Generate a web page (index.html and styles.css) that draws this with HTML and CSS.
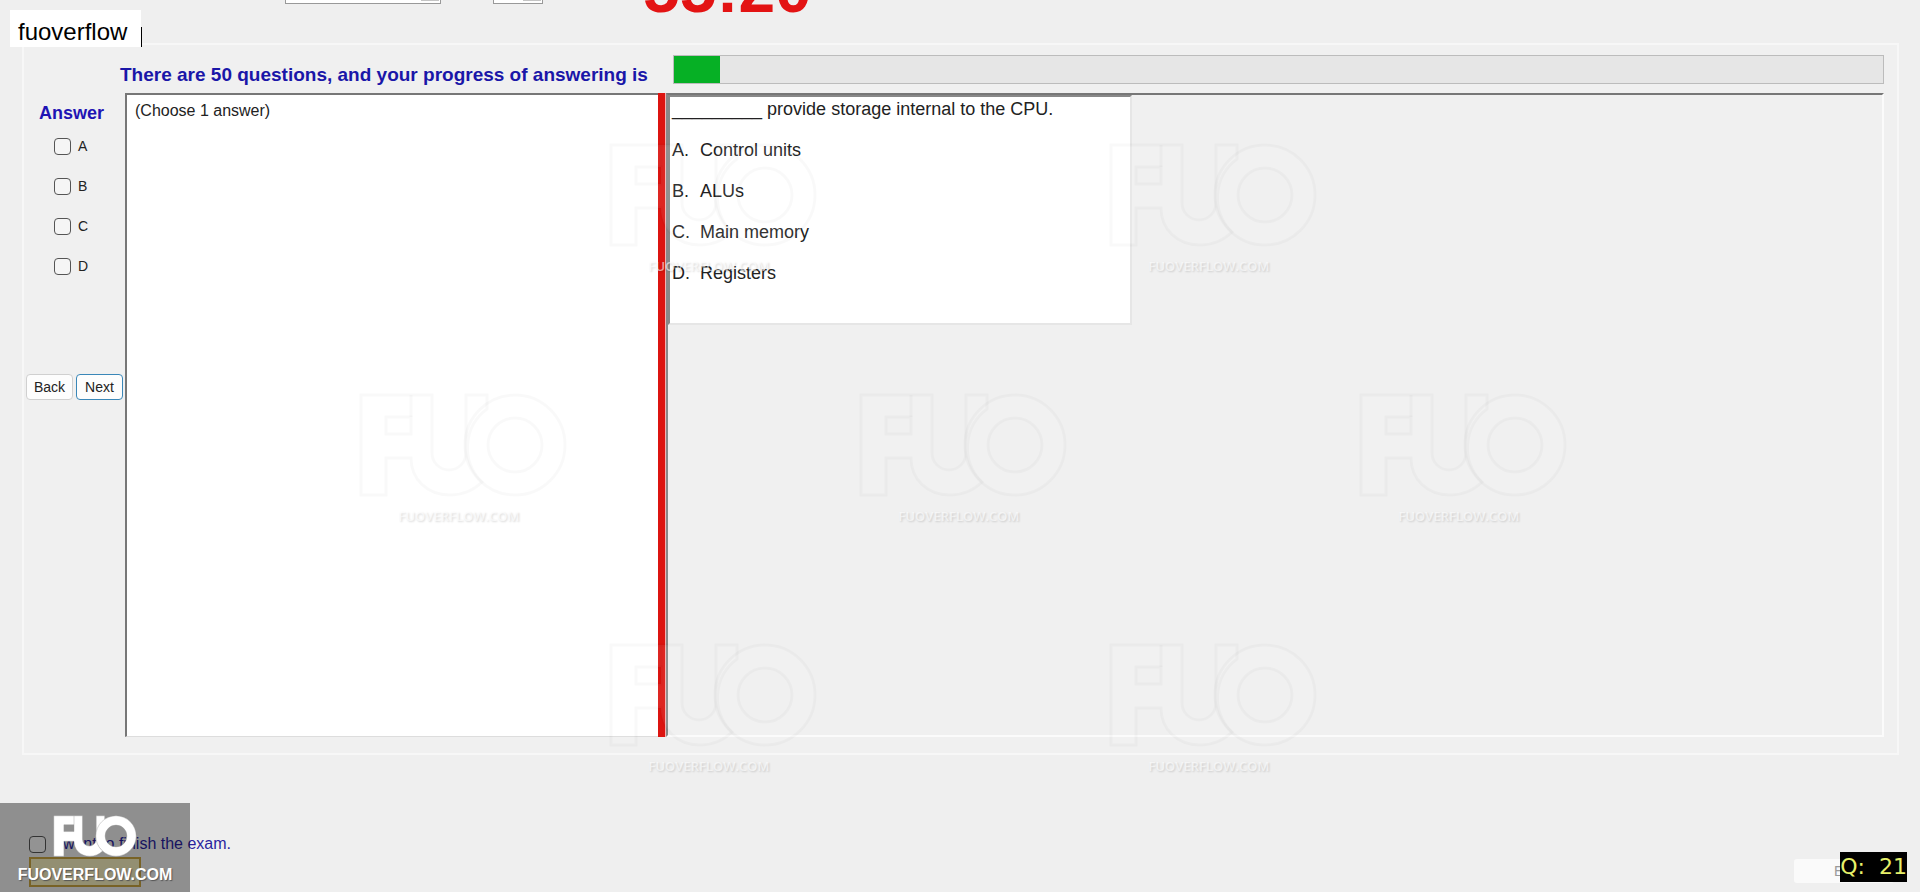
FILE: index.html
```html
<!DOCTYPE html>
<html lang="en">
<head>
<meta charset="utf-8">
<title>Exam</title>
<link rel="stylesheet" href="styles.css">
</head>
<body>
<svg class="defs" aria-hidden="true">
  <defs>
    <g id="fuo">
      <path d="M0 0H71V58A17 17 0 0 0 105 58V0H126V14A48 48 0 0 0 121 87C112 96 101 100 89 100C66 100 50 84 50 63H25V100H0Z M25 22V39H50V22Z" fill-rule="evenodd"/>
      <path d="M50 0V22" fill="none"/>
      <path d="M154 0A50 50 0 1 0 154 100A50 50 0 1 0 154 0Z M154 23A27 27 0 1 1 154 77A27 27 0 1 1 154 23Z" fill-rule="evenodd"/>
    </g>
  </defs>
</svg>
<div class="app">
  <header class="topbar">
    <select class="pick pick-wide" aria-label="Font"><option></option></select>
    <select class="pick pick-small" aria-label="Size"><option></option></select>
    <div class="clock">55:20</div>
  </header>
  <div class="tag">fuoverflow</div>

  <main class="exam">
    <div class="status">
      <label class="status-text" id="progress-label">There are 50 questions, and your progress of answering is</label>
      <div class="track" role="progressbar" aria-labelledby="progress-label" aria-valuenow="4" aria-valuemax="100"><div class="fill"></div></div>
    </div>
    <div class="work">
      <aside class="answers">
        <h2 class="answers-title">Answer</h2>
        <label class="choice"><input type="checkbox" class="box">A</label>
        <label class="choice"><input type="checkbox" class="box">B</label>
        <label class="choice"><input type="checkbox" class="box">C</label>
        <label class="choice"><input type="checkbox" class="box">D</label>
        <div class="nav">
          <button class="btn">Back</button>
          <button class="btn btn-active">Next</button>
        </div>
      </aside>
      <section class="hint">(Choose 1 answer)</section>
      <div class="divider"></div>
      <section class="viewer">
        <article class="question">
          <p class="line">_________ provide storage internal to the CPU.</p>
          <p class="line"><span class="key">A.</span>Control units</p>
          <p class="line"><span class="key">B.</span>ALUs</p>
          <p class="line"><span class="key">C.</span>Main memory</p>
          <p class="line"><span class="key">D.</span>Registers</p>
        </article>
      </section>
    </div>
  </main>

  <footer class="bottom">
    <div class="finish">
      <label class="finish-label"><input type="checkbox" class="box">I want to finish the exam.</label>
      <button class="finish-btn" aria-label="Finish"></button>
    </div>
    <button class="exit">Exit</button>
  </footer>

  <div class="mark m1"><svg class="mark-logo" viewBox="-2 -2 208 104"><use href="#fuo"/></svg><span class="mark-text">FUOVERFLOW.COM</span></div>
  <div class="mark m2"><svg class="mark-logo" viewBox="-2 -2 208 104"><use href="#fuo"/></svg><span class="mark-text">FUOVERFLOW.COM</span></div>
  <div class="mark m3"><svg class="mark-logo" viewBox="-2 -2 208 104"><use href="#fuo"/></svg><span class="mark-text">FUOVERFLOW.COM</span></div>
  <div class="mark m4"><svg class="mark-logo" viewBox="-2 -2 208 104"><use href="#fuo"/></svg><span class="mark-text">FUOVERFLOW.COM</span></div>
  <div class="mark m5"><svg class="mark-logo" viewBox="-2 -2 208 104"><use href="#fuo"/></svg><span class="mark-text">FUOVERFLOW.COM</span></div>
  <div class="mark m6"><svg class="mark-logo" viewBox="-2 -2 208 104"><use href="#fuo"/></svg><span class="mark-text">FUOVERFLOW.COM</span></div>
  <div class="mark m7"><svg class="mark-logo" viewBox="-2 -2 208 104"><use href="#fuo"/></svg><span class="mark-text">FUOVERFLOW.COM</span></div>

  <div class="brand"><svg class="brand-logo" viewBox="-2 -2 208 104"><use href="#fuo"/></svg>FUOVERFLOW.COM</div>
  <div class="counter">Q:  21</div>
</div>
</body>
</html>
```
FILE: styles.css
```css
* { box-sizing: border-box; }
body {
  margin: 0;
  background: #efefef;
  color: #222;
  font-family: "Liberation Sans", Arial, sans-serif;
}
.defs { position: absolute; width: 0; height: 0; }
.app {
  position: relative;
  display: flex;
  flex-direction: column;
  height: 100vh;
  overflow: hidden;
}
.topbar {
  display: flex;
  align-items: flex-end;
  flex: none;
  height: 43px;
  padding: 0 0 24px 285px;
  overflow: hidden;
}
.pick {
  appearance: none;
  height: 24px;
  margin-bottom: 15px;
  border: 1px solid #999;
  border-radius: 0;
  background: linear-gradient(#c4c4c4, #c4c4c4) right 1px top 0 / 18px 20px no-repeat #fff;
}
.pick-wide { width: 156px; }
.pick-small { width: 50px; margin-left: 52px; }
.clock {
  margin-left: 100px;
  margin-bottom: -8px;
  color: #e31313;
  font-size: 66px;
  font-weight: bold;
  line-height: 76px;
}
.tag {
  position: absolute;
  left: 10px;
  top: 10px;
  z-index: 2;
  padding: 7px 14px 0 8px;
  background: #fff;
  color: #000;
  font-size: 24px;
  line-height: 30px;
}
.tag::after {
  content: "";
  position: absolute;
  right: -1px;
  bottom: 0;
  width: 1px;
  height: 20px;
  background: #000;
}
.exam {
  display: flex;
  flex-direction: column;
  flex: 1;
  margin: 0 21px 0 22px;
  padding: 10px 13px 16px 2px;
  border: 2px solid #f7f7f7;
  background: #f0f0f0;
}
.status {
  display: flex;
  align-items: center;
  height: 29px;
  padding-left: 94px;
}
.status-text {
  width: 553px;
  padding-top: 10px;
  color: #1a16a8;
  font-size: 19px;
  font-weight: bold;
  white-space: nowrap;
}
.track {
  flex: 1;
  height: 29px;
  border: 1px solid #bcbcbc;
  background: #e6e6e6;
}
.fill { width: 46px; height: 27px; background: #06b025; }
.work { display: flex; flex: 1; margin-top: 9px; }
.answers {
  display: flex;
  flex-direction: column;
  width: 99px;
}
.answers-title {
  margin: 10px 0 13px 13px;
  color: #1f14b4;
  font-size: 18px;
  line-height: 20px;
}
.choice {
  display: flex;
  align-items: center;
  gap: 7px;
  height: 20px;
  margin: 0 0 20px 28px;
  font-size: 14px;
}
.box {
  appearance: none;
  flex: none;
  width: 17px;
  height: 17px;
  margin: 0;
  border: 1px solid #555;
  border-radius: 4px;
  background: #f5f5f5;
}
.nav { display: flex; gap: 3px; margin-top: 78px; }
.btn {
  width: 47px;
  height: 26px;
  padding: 0;
  border: 1px solid #d0d0d0;
  border-radius: 4px;
  background: #fdfdfd;
  color: #222;
  font: 14px "Liberation Sans", Arial, sans-serif;
}
.btn-active { border-color: #3a87b8; }
.hint {
  width: 533px;
  padding: 6px 8px;
  border-top: 2px solid #777;
  border-left: 2px solid #777;
  border-bottom: 1px solid #ddd;
  background: #fff;
  font-size: 16px;
  line-height: 20px;
}
.divider { width: 8px; border-right: 1px solid #f6b0b0; background: #dc1410; }
.viewer {
  flex: 1;
  border: 2px solid #fbfbfb;
  border-top-color: #777;
  border-left-color: #888;
}
.question {
  width: 464px;
  height: 230px;
  padding: 1px 2px;
  border: 2px solid #888;
  border-right-color: #e6e6e6;
  border-bottom-color: #e6e6e6;
  background: #fff;
  font-size: 18px;
}
.line { margin: 0 0 19px; line-height: 22px; white-space: nowrap; }
.key { display: inline-block; width: 28px; }
.bottom {
  display: flex;
  flex: none;
  justify-content: space-between;
  height: 137px;
  padding: 79px 26px 0 29px;
}
.finish-label {
  display: flex;
  align-items: center;
  gap: 8px;
  height: 20px;
  color: #2a1f9e;
  font-size: 16px;
}
.finish-btn {
  width: 112px;
  height: 30px;
  margin-top: 3px;
  border: 2px solid #c8a440;
  background: #f6eebe;
}
.exit {
  width: 100px;
  height: 24px;
  margin-top: 25px;
  padding: 0 0 0 40px;
  border: 0;
  border-radius: 3px;
  background: #fafafa;
  color: #999;
  font: 14px "Liberation Sans", Arial, sans-serif;
  text-align: left;
}
.mark {
  position: absolute;
  z-index: 1;
  width: 208px;
  pointer-events: none;
}
.mark-logo {
  display: block;
  width: 208px;
  height: 104px;
  margin-bottom: 11px;
  fill: rgba(255, 255, 255, 0.08);
  stroke: rgba(0, 0, 0, 0.025);
  stroke-width: 3;
}
.mark-text {
  display: block;
  width: 200px;
  color: rgba(255, 255, 255, 0.6);
  font: 600 13px/16px "Open Sans", sans-serif;
  text-align: center;
  text-shadow: 1px 1px 2px rgba(0, 0, 0, 0.15);
}
.m1 { left: 609px; top: 143px; }
.m2 { left: 1109px; top: 143px; }
.m3 { left: 359px; top: 393px; }
.m4 { left: 859px; top: 393px; }
.m5 { left: 1359px; top: 393px; }
.m6 { left: 609px; top: 643px; }
.m7 { left: 1109px; top: 643px; }
.brand {
  position: absolute;
  left: 0;
  bottom: 0;
  z-index: 2;
  width: 190px;
  height: 89px;
  padding-top: 12px;
  background: rgba(0, 0, 0, 0.4);
  color: #fff;
  font: bold 16px/24px "Liberation Sans", Arial, sans-serif;
  text-align: center;
  text-shadow: 1px 1px 1px #555;
}
.brand-logo {
  display: block;
  width: 84px;
  height: 42px;
  margin: 0 auto 6px;
  fill: #fff;
  stroke: #999;
  stroke-width: 1;
}
.counter {
  position: absolute;
  right: 13px;
  bottom: 10px;
  z-index: 2;
  background: #000;
  color: #e6f06a;
  font: 22px/30px "DejaVu Sans", sans-serif;
  white-space: pre;
}
```
